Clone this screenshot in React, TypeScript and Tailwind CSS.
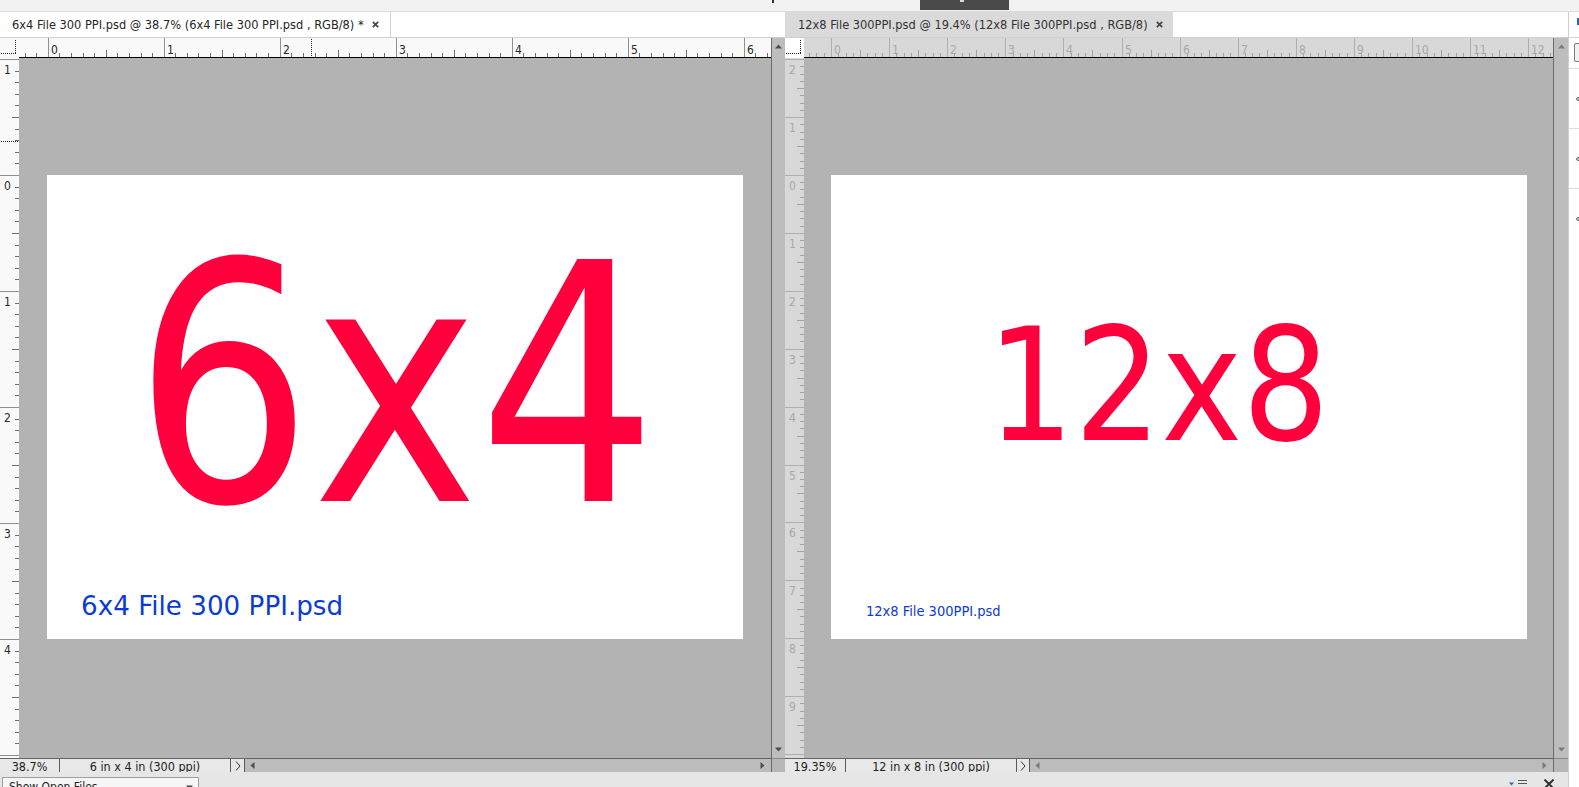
import React from "react";

type Theme = { bg: string; tick: string; text: string; major: string };
const ACTIVE: Theme = { bg: "#f9f9f9", tick: "#6e6e6e", text: "#2b2b2b", major: "#8f8f8f" };
const INACTIVE: Theme = { bg: "#d8d8d8", tick: "#a2a2a2", text: "#a8a8a8", major: "#afafaf" };

function mod(a: number, b: number) {
  return ((a % b) + b) % b;
}

function HRuler({ length, origin, scale, divs, theme, cursor }: { length: number; origin: number; scale: number; divs: number; theme: Theme; cursor?: number }) {
  const step = scale / divs;
  const start = Math.ceil(-origin / step);
  const end = Math.floor((length - origin) / step);
  const els: React.ReactNode[] = [];
  for (let i = start; i <= end; i++) {
    const x = Math.round(origin + i * step) + 0.5;
    const m = mod(i, divs);
    if (m === 0) {
      els.push(<line key={`l${i}`} x1={x} x2={x} y1={0} y2={19} stroke={theme.major} />);
      els.push(
        <text key={`t${i}`} x={x + 2.5} y={15.5} fontSize={12} fill={theme.text}>
          {Math.abs(i / divs)}
        </text>
      );
    } else {
      const h = m * 2 === divs ? 7 : 4;
      els.push(<line key={`l${i}`} x1={x} x2={x} y1={19 - h} y2={19} stroke={theme.tick} />);
    }
  }
  return (
    <svg width={length} height={19} className="block">
      {els}
      {cursor !== undefined && (
        <line x1={cursor + 0.5} x2={cursor + 0.5} y1={1} y2={19} stroke="#222" strokeDasharray="1 1" />
      )}
    </svg>
  );
}

function VRuler({ length, origin, scale, divs, theme, cursor }: { length: number; origin: number; scale: number; divs: number; theme: Theme; cursor?: number }) {
  const step = scale / divs;
  const start = Math.ceil(-origin / step);
  const end = Math.floor((length - origin) / step);
  const els: React.ReactNode[] = [];
  for (let i = start; i <= end; i++) {
    const y = Math.round(origin + i * step) + 0.5;
    const m = mod(i, divs);
    if (m === 0) {
      els.push(<line key={`l${i}`} x1={0} x2={19} y1={y} y2={y} stroke={theme.major} />);
      els.push(
        <text key={`t${i}`} x={4} y={y + 14} fontSize={12} fill={theme.text}>
          {Math.abs(i / divs)}
        </text>
      );
    } else {
      const h = m * 2 === divs ? 7 : 4;
      els.push(<line key={`l${i}`} x1={19 - h} x2={19} y1={y} y2={y} stroke={theme.tick} />);
    }
  }
  return (
    <svg width={19} height={length} className="block">
      {els}
      {cursor !== undefined && (
        <line x1={1} x2={19} y1={cursor + 0.5} y2={cursor + 0.5} stroke="#222" strokeDasharray="1 1" />
      )}
    </svg>
  );
}

function Corner() {
  return (
    <svg width={19} height={20} className="block">
      <line x1={15.5} x2={15.5} y1={2} y2={16} stroke="#222" strokeDasharray="1 1" />
      <line x1={1} x2={16} y1={15.5} y2={15.5} stroke="#222" strokeDasharray="1 1" />
    </svg>
  );
}

function Tri({ dir, color = "#4d4d4d" }: { dir: "up" | "down" | "left" | "right"; color?: string }) {
  const pts = {
    up: "0,4.5 3.5,0.5 7,4.5",
    down: "0,0.5 7,0.5 3.5,4.5",
    left: "4.5,0 4.5,7 0.5,3.5",
    right: "0.5,0 0.5,7 4.5,3.5",
  }[dir];
  const w = dir === "up" || dir === "down" ? 7 : 5;
  const h = dir === "up" || dir === "down" ? 5 : 7;
  return (
    <svg width={w} height={h} className="block">
      <polygon points={pts} fill={color} />
    </svg>
  );
}

function CloseX() {
  return (
    <svg width={7} height={7} className="block">
      <path d="M0.8 0.8 L6.2 6.2 M6.2 0.8 L0.8 6.2" stroke="#444" strokeWidth={1.7} />
    </svg>
  );
}

function Chevron() {
  return (
    <svg width={6} height={10} className="block">
      <path d="M1 0.5 L5 5 L1 9.5" stroke="#333" strokeWidth={1} fill="none" />
    </svg>
  );
}

function LeftPane() {
  return (
    <div className="w-[785px] flex flex-col">
      <div className="h-[26px] bg-white border-b border-[#cfcfcf] flex">
        <div className="w-[391px] border-r border-[#d2d2d2] flex items-center pl-[12px] pr-[11px] text-[12.7px] text-[#262626] whitespace-nowrap">
          <span>6x4 File 300 PPI.psd @ 38.7% (6x4 File 300 PPI.psd , RGB/8) *</span>
          <span className="ml-auto">
            <CloseX />
          </span>
        </div>
      </div>
      <div className="flex h-[734px]">
        <div className="w-[771px] flex flex-col">
          <div className="h-[20px] flex">
            <div className="w-[19px] h-[20px] bg-[#f9f9f9]">
              <Corner />
            </div>
            <div className="w-[752px] h-[20px] bg-[#f9f9f9] border-b border-black">
              <HRuler length={752} origin={28.7} scale={116} divs={10} theme={ACTIVE} cursor={292} />
            </div>
          </div>
          <div className="h-[700px] flex">
            <div className="w-[19px] bg-[#f9f9f9]">
              <VRuler length={700} origin={117} scale={116} divs={10} theme={ACTIVE} cursor={83} />
            </div>
            <div className="w-[752px] bg-[#b3b3b3] overflow-hidden">
              <div className="ml-[28px] mt-[117px] w-[696px] h-[464px] bg-white flex flex-col items-center overflow-hidden">
                <div className="mt-[45px] h-[332px] text-[332px] leading-none text-[#ff003c] scale-x-[0.94] whitespace-nowrap">
                  6x4
                </div>
                <div className="self-start ml-[34px] mt-[41px] text-[26.2px] leading-none text-[#0b3bd6] font-['DejaVu_Sans',sans-serif] whitespace-nowrap">
                  6x4 File 300 PPI.psd
                </div>
              </div>
            </div>
          </div>
          <div className="h-[14px] border-t border-[#646464] flex bg-[#e8e8e8] text-[12.5px] text-[#1e1e1e] leading-[12px]">
            <div className="w-[60px] border-r border-[#5a5a5a] text-center pt-[2px] overflow-hidden">38.7%</div>
            <div className="w-[171px] border-r border-[#5a5a5a] text-center pt-[2px] overflow-hidden whitespace-nowrap">
              6 in x 4 in (300 ppi)
            </div>
            <div className="w-[14px] border-r border-[#5a5a5a] flex items-center justify-center">
              <Chevron />
            </div>
            <div className="flex-1 bg-[#bcbcbc] flex items-center justify-between pl-[5px] pr-[6px]">
              <Tri dir="left" />
              <Tri dir="right" />
            </div>
          </div>
        </div>
        <div className="w-[14px] flex flex-col border-l border-[#6b6b6b]">
          <div className="h-[720px] bg-[#bdbdbd] flex flex-col items-center justify-between pt-[6px] pb-[6px]">
            <Tri dir="up" />
            <Tri dir="down" />
          </div>
          <div className="h-[14px] bg-[#b7b7b7] border-t border-[#8a8a8a]" />
        </div>
      </div>
    </div>
  );
}

function RightPane() {
  return (
    <div className="w-[783px] flex flex-col">
      <div className="h-[26px] bg-white border-b border-[#cfcfcf] flex">
        <div className="w-[388px] bg-[#dadada] flex items-center pl-[13px] pr-[10px] text-[12.7px] text-[#333] whitespace-nowrap">
          <span>12x8 File 300PPI.psd @ 19.4% (12x8 File 300PPI.psd , RGB/8)</span>
          <span className="ml-auto">
            <CloseX />
          </span>
        </div>
      </div>
      <div className="flex h-[734px]">
        <div className="w-[768px] flex flex-col">
          <div className="h-[20px] flex">
            <div className="w-[19px] h-[20px] bg-white">
              <Corner />
            </div>
            <div className="w-[749px] h-[20px] bg-[#d8d8d8] border-b border-black">
              <HRuler length={749} origin={27} scale={58.1} divs={8} theme={INACTIVE} />
            </div>
          </div>
          <div className="h-[700px] flex">
            <div className="w-[19px] bg-[#d8d8d8]">
              <VRuler length={700} origin={117} scale={57.9} divs={8} theme={INACTIVE} />
            </div>
            <div className="w-[749px] bg-[#b3b3b3] overflow-hidden">
              <div className="ml-[27px] mt-[117px] w-[696px] h-[464px] bg-white flex flex-col items-start overflow-hidden">
                <div className="ml-[156px] mt-[132px] h-[157px] text-[157px] leading-none text-[#ff003c] scale-x-[0.97] origin-left whitespace-nowrap">
                  12x8
                </div>
                <div className="ml-[35px] mt-[140px] text-[14.5px] leading-none text-[#0b3bd6] whitespace-nowrap">
                  12x8 File 300PPI.psd
                </div>
              </div>
            </div>
          </div>
          <div className="h-[14px] border-t border-[#646464] flex bg-[#e8e8e8] text-[12.5px] text-[#1e1e1e] leading-[12px]">
            <div className="w-[61px] border-r border-[#5a5a5a] text-center pt-[2px] overflow-hidden">19.35%</div>
            <div className="w-[171px] border-r border-[#5a5a5a] text-center pt-[2px] overflow-hidden whitespace-nowrap">
              12 in x 8 in (300 ppi)
            </div>
            <div className="w-[13px] border-r border-[#5a5a5a] flex items-center justify-center">
              <Chevron />
            </div>
            <div className="flex-1 bg-[#bcbcbc] flex items-center justify-between pl-[5px] pr-[6px]">
              <Tri dir="left" color="#7a7a7a" />
              <Tri dir="right" color="#7a7a7a" />
            </div>
          </div>
        </div>
        <div className="w-[15px] flex flex-col border-l border-[#6b6b6b]">
          <div className="h-[720px] bg-[#bdbdbd] flex flex-col items-center justify-between pt-[6px] pb-[6px]">
            <Tri dir="up" color="#7a7a7a" />
            <Tri dir="down" color="#7a7a7a" />
          </div>
          <div className="h-[14px] bg-[#b7b7b7] border-t border-[#8a8a8a]" />
        </div>
      </div>
    </div>
  );
}

function SidePanel() {
  return (
    <div className="w-[11px] bg-white border-l border-[#cfcfcf] flex flex-col overflow-hidden">
      <div className="h-[26px] border-b border-[#d5d5d5] pl-[8px] pt-[6px]">
        <div className="w-[3px] h-[7px] bg-[#2f64a8]" />
      </div>
      <div className="ml-[5px] mt-[5px] w-[10px] h-[19px] shrink-0 border border-[#7c7c7c] rounded-[2px] bg-[#f1f1f1]" />
      <div className="mt-[6px] flex flex-col">
        {[0, 1, 2].map((i) => (
          <div key={i} className="h-[60px] border-t border-[#dedede] flex items-center pl-[7px]">
            <svg width={4} height={4} className="block">
              <circle cx={2} cy={2} r={1.4} stroke="#555" strokeWidth={1} fill="none" />
            </svg>
          </div>
        ))}
      </div>
    </div>
  );
}

function BottomPanel() {
  return (
    <div className="h-[15px] bg-[#e6e6e6] flex items-start overflow-hidden">
      <div className="ml-[2px] mt-[5px] w-[197px] h-[16px] shrink-0 border border-[#a0a0a0] bg-[#f6f6f6] flex items-start pl-[6px] pr-[5px] pt-[3px] text-[12px] leading-none text-[#222] whitespace-nowrap">
        <span>Show Open Files</span>
        <span className="ml-auto mt-[4px]">
          <Tri dir="down" color="#444" />
        </span>
      </div>
      <div className="ml-auto mr-[14px] mt-[7px] flex items-start gap-[17px]">
        <svg width={18} height={8} className="block">
          <polygon points="0,3.5 5,3.5 2.5,6.5" fill="#2f64a8" />
          <line x1={9} x2={18} y1={1.5} y2={1.5} stroke="#555" />
          <line x1={9} x2={18} y1={4.5} y2={4.5} stroke="#555" />
        </svg>
        <svg width={10} height={8} className="block">
          <path d="M0.5 0.5 L5 5 L9.5 0.5 M5 5 L0.5 9.5 M5 5 L9.5 9.5" stroke="#333" strokeWidth={2} fill="none" />
        </svg>
      </div>
    </div>
  );
}

export default function App() {
  return (
    <div className="w-[1579px] h-[787px] overflow-hidden bg-[#f2f2f2] flex flex-col font-['DejaVu_Sans_Condensed','DejaVu_Sans',sans-serif]">
      <div className="h-[12px] shrink-0 border-b border-[#dcdcdc] flex items-start">
        <div className="ml-[772px] w-[2px] h-[3px] bg-[#333]" />
        <div className="ml-[146px] w-[89px] h-[10px] bg-[#4a4a4a] flex justify-center">
          <div className="ml-[-6px] w-[4px] h-[2px] bg-[#dcdcdc]" />
        </div>
      </div>
      <div className="flex h-[775px]">
        <div className="w-[1568px] flex flex-col">
          <div className="flex h-[760px]">
            <LeftPane />
            <RightPane />
          </div>
          <BottomPanel />
        </div>
        <SidePanel />
      </div>
    </div>
  );
}
